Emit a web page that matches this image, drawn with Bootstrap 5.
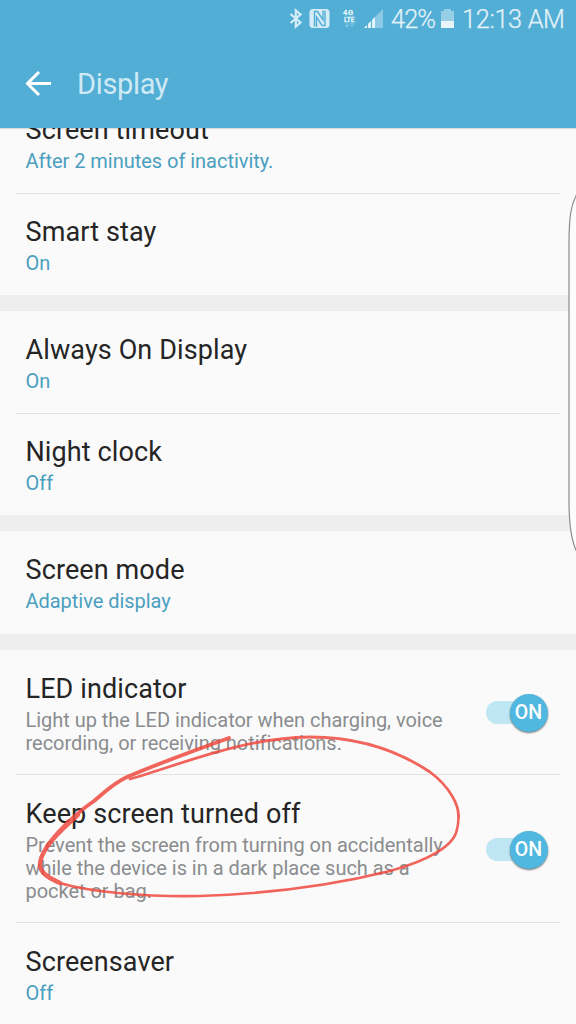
<!DOCTYPE html>
<html lang="en">
<head>
<meta charset="utf-8">
<meta name="viewport" content="width=device-width, initial-scale=1">
<title>Display</title>
<link rel="stylesheet" href="https://cdn.jsdelivr.net/npm/bootstrap@5.3.0/dist/css/bootstrap.min.css">
<style>
body{font-family:Roboto,"Liberation Sans",sans-serif;background:#fafafa;color:#252525;height:1024px;overflow:hidden}
.top-area{background:#52aed5;height:128px;z-index:2;box-shadow:0 1px 1px rgba(0,0,0,.12)}
.status{height:40px;padding-right:12px}
.status svg{flex:none}
.title-bar{height:88px;padding:0 0 0 24px}
.title-bar h1{font-size:29px;letter-spacing:-.35px;font-weight:400;color:#cfe9f5;margin:0 0 0 25px;line-height:90px}
.settings{margin-top:-36px}
.settings .item{padding:22px 27px 20px 25.5px;min-height:101px}
.settings .item.roomy{padding-top:23px;padding-bottom:19px}
.settings .item.always{padding-top:23.400px;padding-bottom:19px;min-height:102px}
.settings .item.mode{padding-top:23.300px;min-height:103px}
.rule{height:1px;background:#e0e0e0;margin:0 16px}
.gap-band{height:16px;background:#eee}
.name{font-size:27px;letter-spacing:.11px;line-height:32px;margin:0 0 4px;font-weight:400;white-space:nowrap}
.desc{font-size:20px;letter-spacing:-.03px;line-height:23px;margin:0;color:#8a8c8e;white-space:nowrap}
.desc.value{color:#4a9fc0}
.toggle{width:63px;height:44px;flex:none}
.track{left:0;top:9px;width:52px;height:23px;border-radius:12px;background:#bfe6f3}
.knob{left:23.5px;top:2px;width:38px;height:38px;border-radius:50%;background:#50b8e0;color:#fff;font-size:19.5px;font-weight:500;line-height:38px;text-align:center;box-shadow:0 1px 2px rgba(0,0,0,.55)}
.ink{left:0;top:0;z-index:3;pointer-events:none}
</style>
</head>
<body class="position-relative">
<header class="top-area position-relative">
  <div class="status d-flex justify-content-end align-items-center">
    <svg width="288" height="40" viewBox="276 0 288 40" fill="none">
      <path d="M290.500 14L300.500 22.500L295.800 26.500V10.500L300.500 14.500L290.500 23" stroke="#d6edf7" stroke-width="2.200"/>
      <rect x="309.500" y="9" width="20" height="19" rx="3.500" fill="#d6edf7"/>
      <path d="M314.500 26.500V11.500H317.500L323 20V10.500M316.500 27V17L322 25.500H325V10.500" stroke="#52aed5" stroke-width="1.400"/>
      <g fill="#e4f3f9" stroke="#d6edf7" stroke-width=".3" font-family="Roboto,sans-serif" font-weight="700"><text x="343" y="15" font-size="7.500" textLength="10">4G</text><text x="344" y="21.500" font-size="6.500" textLength="10.500" lengthAdjust="spacingAndGlyphs">LTE</text></g>
      <path d="M347 22.500v4.500M345 25l2 2 2-2M352 27v-4.500M350 24.500l2-2 2 2" stroke="#91cbe4" stroke-width="1"/>
      <path d="M364 28L383 9V28Z" fill="#8bc9e4"/>
      <path d="M364 28L375 17V28Z" fill="#e4f3f9"/>
      <path d="M367.500 20v8M371.500 17v11" stroke="#52aed5" stroke-width="1"/>
      <g fill="#e2f2f9" stroke="#e2f2f9" stroke-width=".25" font-family="Roboto,sans-serif" font-weight="300" font-size="25.300"><text x="391" y="28" textLength="45">42%</text><text x="462" y="28" textLength="103">12:13 AM</text></g>
      <path d="M441 11h3V9h7v2h3v10h-13z" fill="#97cfe7"/><path d="M441 21h13v7h-13z" fill="#e7f5fa"/>
    </svg>
  </div>
  <div class="title-bar d-flex align-items-center">
    <svg width="28" height="28" viewBox="0 0 28 28" fill="none" stroke="#fff" stroke-width="3"><path d="M15 2L3.500 13.500L15 25M3 13.500H27"/></svg>
    <h1>Display</h1>
  </div>
</header>
<main class="settings">
  <section><div class="item"><h2 class="name">Screen timeout</h2><p class="desc value">After 2 minutes of inactivity.</p></div>
  <div class="rule"></div>
  <div class="item"><h2 class="name">Smart stay</h2><p class="desc value">On</p></div></section>
  <div class="gap-band"></div>
  <section><div class="item always"><h2 class="name">Always On Display</h2><p class="desc value">On</p></div>
  <div class="rule"></div>
  <div class="item"><h2 class="name">Night clock</h2><p class="desc value">Off</p></div></section>
  <div class="gap-band"></div>
  <section><div class="item mode"><h2 class="name">Screen mode</h2><p class="desc value">Adaptive display</p></div></section>
  <div class="gap-band"></div>
  <section>
  <div class="item roomy d-flex justify-content-between align-items-center"><div><h2 class="name">LED indicator</h2><p class="desc">Light up the LED indicator when charging, voice<br>recording, or receiving notifications.</p></div>
    <div class="toggle position-relative"><div class="track position-absolute"></div><div class="knob position-absolute">ON</div></div></div>
  <div class="rule"></div>
  <div class="item roomy d-flex justify-content-between align-items-center"><div><h2 class="name">Keep screen turned off</h2><p class="desc">Prevent the screen from turning on accidentally<br>while the device is in a dark place such as a<br>pocket or bag.</p></div>
    <div class="toggle position-relative"><div class="track position-absolute"></div><div class="knob position-absolute">ON</div></div></div>
  <div class="rule"></div>
  <div class="item roomy"><h2 class="name">Screensaver</h2><p class="desc value">Off</p></div>
  </section>
</main>
<svg class="ink position-absolute" width="576" height="1024" fill="none">
  <path d="M577 194C571 205 569 216 569 245V500C569 525 571 541 577 552" fill="#fcfcfc" stroke="#8c8c8c" stroke-width="1.200"/>
  <g stroke="#f04a40" stroke-linecap="round" stroke-linejoin="round" opacity=".85">
    <path d="M229 738C190 752 155 765 127 777C112 784 104 793 94 801C72 816 41 846 40 864C39 874 52 880 60 883" stroke-width="3.800"/>
    <path d="M60 883C90 892 145 897 200 896C260 894 330 886 390 871C430 860 455 845 457 829C458.500 824 458.500 820 458.500 815" stroke-width="2.600"/>
    <path d="M130 779C180 765 240 738 310 737C360 737 400 752 430 772C450 787 459 805 458.500 817" stroke-width="2.800"/>
    <path d="M78 815C58 833 41 849 40 864C40 873 49 878 60 883" stroke-width="4.300"/>
  </g>
</svg>
<script src="https://cdn.jsdelivr.net/npm/bootstrap@5.3.0/dist/js/bootstrap.bundle.min.js"></script>
</body>
</html>
